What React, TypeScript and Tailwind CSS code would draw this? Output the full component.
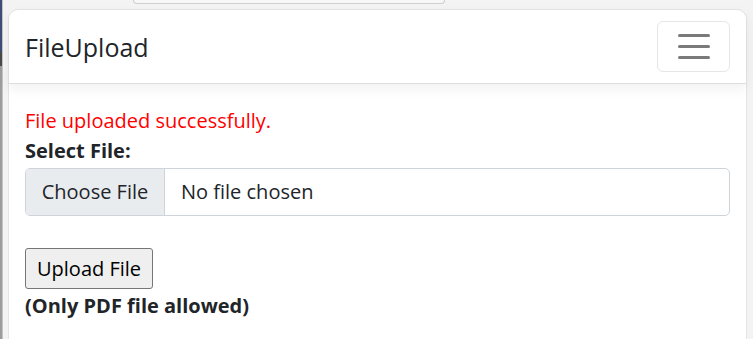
import React from "react";

const font = { fontFamily: '"Open Sans", "Noto Sans", sans-serif' };

function Toggler() {
  return (
    <button
      type="button"
      className="flex h-[51px] w-[73px] flex-col items-center justify-center gap-[8px] rounded-[6px] border border-[#e6e6e6] bg-white"
    >
      <span className="block h-[3px] w-[32px] rounded-full bg-[#7a7a7a]" />
      <span className="block h-[3px] w-[32px] rounded-full bg-[#7a7a7a]" />
      <span className="block h-[3px] w-[32px] rounded-full bg-[#7a7a7a]" />
    </button>
  );
}

export default function App() {
  return (
    <div className="flex h-[339px] w-[753px] overflow-hidden bg-[#f3f3f3]" style={font}>
      {/* desktop edge behind the window */}
      <div className="flex w-[2px] flex-col">
        <div className="h-[52px] bg-[#3d4f78]" />
        <div className="h-[14px] bg-[#4a4a4a]" />
        <div className="flex-1 bg-[#9c9c9c]" />
      </div>
      <div className="w-[1px] bg-[#c4c4c4]" />

      <div className="flex flex-1 flex-col pl-[5px] pr-[6px]">
        <div className="h-[9px]">
          <div className="ml-[125px] h-[4px] w-[312px] rounded-b-[10px] border-x border-b border-[#cfcfcf] bg-[#f7f7f7]" />
        </div>

        <div className="flex flex-1 flex-col rounded-t-[10px] border-x border-t border-[#e4e4e4] bg-white">
          <nav className="relative z-10 flex h-[74px] items-center justify-between border-b border-[#dedede] px-[16px] shadow-[0_5px_12px_rgba(0,0,0,0.06)]">
            <span className="text-[25px] leading-[38px] text-[#212529]">FileUpload</span>
            <Toggler />
          </nav>

          <main className="px-[16px] pt-[22px] text-[20px] leading-[30px] text-[#212529]">
            <p className="text-[#ff0000]">File uploaded successfully.</p>
            <label className="block font-bold">Select File:</label>

            <div className="mt-[2px] flex h-[48px] w-full items-stretch overflow-hidden rounded-[5px] border border-[#ced4da]">
              <span className="flex w-[139px] items-center justify-center border-r border-[#ced4da] bg-[#e9ecef]">
                Choose File
              </span>
              <span className="flex items-center pl-[16px]">No file chosen</span>
            </div>

            <button
              type="button"
              className="mt-[32px] block h-[41px] rounded-[3px] border border-[#767676] bg-[#efefef] px-[11px] text-[20px] leading-[28px] text-black"
            >
              Upload File
            </button>
            <p className="mt-[2px] font-bold">(Only PDF file allowed)</p>
          </main>
        </div>
      </div>
    </div>
  );
}
